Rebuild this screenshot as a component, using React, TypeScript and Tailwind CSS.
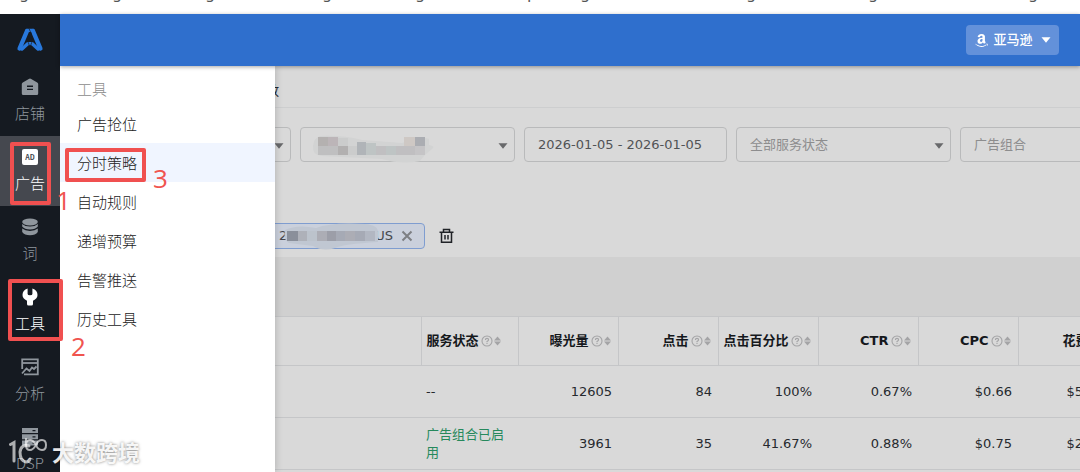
import type { ReactNode } from 'react';
import { FaAmazon } from 'react-icons/fa';

const textFont = "font-['DejaVu_Sans','Noto_Sans_CJK_SC',sans-serif]";
const cjkFont = "font-['Noto_Sans_CJK_SC',sans-serif]";

interface NavItem {
  label: string;
  icon: ReactNode;
  state?: 'active' | 'open';
}

const navItems: NavItem[] = [
  {
    label: '店铺',
    icon: (
      <svg width="18" height="18" viewBox="0 0 18 18" fill="currentColor">
        <path
          fillRule="evenodd"
          d="M9 0.5 Q9.6 0.5 10.2 0.9 L16.2 4.4 Q17.2 5 17.2 6 V15.5 Q17.2 17 15.7 17 H2.3 Q0.8 17 0.8 15.5 V6 Q0.8 5 1.8 4.4 L7.8 0.9 Q8.4 0.5 9 0.5 Z M6 7.6 V8.9 H12 V7.6 Z M6 10.8 V12.1 H12 V10.8 Z"
        />
      </svg>
    ),
  },
  {
    label: '广告',
    state: 'active',
    icon: (
      <span className="flex h-4 w-4 items-center justify-center rounded-xs bg-white text-[7px] font-bold text-[#45484f]">
        AD
      </span>
    ),
  },
  {
    label: '词',
    icon: (
      <svg width="18" height="18" viewBox="0 0 18 18" fill="currentColor">
        <ellipse cx="9" cy="4" rx="7.8" ry="3.4" />
        <path d="M1.2 5.9 Q4 8.4 9 8.4 Q14 8.4 16.8 5.9 V8.6 Q14.5 11.6 9 11.6 Q3.5 11.6 1.2 8.6 Z" />
        <path d="M1.2 10.5 Q4 12.9 9 12.9 Q14 12.9 16.8 10.5 V14 Q14.5 17.2 9 17.2 Q3.5 17.2 1.2 14 Z" />
      </svg>
    ),
  },
  {
    label: '工具',
    state: 'open',
    icon: (
      <svg width="18" height="18" viewBox="0 0 18 18" fill="currentColor">
        <path d="M6.6 0.5 V6 Q6.6 7.3 9 7.3 Q11.4 7.3 11.4 6 V0.5 Q16.5 2.2 16.5 7 Q16.5 10.6 12 12.8 V16 Q12 17.5 10.5 17.5 H7.5 Q6 17.5 6 16 V12.8 Q1.5 10.6 1.5 7 Q1.5 2.2 6.6 0.5 Z" />
      </svg>
    ),
  },
  {
    label: '分析',
    icon: (
      <svg width="18" height="18" viewBox="0 0 18 18" fill="none" stroke="currentColor" strokeWidth="1.8">
        <path d="M1.2 11 V1.4 H16.8 V16.4 H3" />
        <path d="M1 5 H17" />
        <path d="M1 15.5 L5.5 10.5 L8.5 13 L11 9.5 L13 11 L15.5 8.5" />
      </svg>
    ),
  },
  {
    label: 'DSP',
    icon: (
      <svg width="18" height="18" viewBox="0 0 18 18" fill="currentColor">
        <path fillRule="evenodd" d="M1 0 H17 V5 H1 Z M11.5 2 V3.2 H14.5 V2 Z" />
        <path fillRule="evenodd" d="M1 6.3 H17 V11.3 H1 Z M11.5 8.3 V9.5 H14.5 V8.3 Z" />
        <path fillRule="evenodd" d="M1 12.6 H17 V17.6 H1 Z M11.5 14.6 V15.8 H14.5 V14.6 Z" />
      </svg>
    ),
  },
];

// Tail of the line above the page; each span is the room up to the next letter.
const captionLetters = [
  { char: 'g', span: 93 },
  { char: 'g', span: 93 },
  { char: 'g', span: 117 },
  { char: 'g', span: 93 },
  { char: 'g', span: 112 },
  { char: 'p', span: 53 },
  { char: 'g', span: 166 },
  { char: 'g', span: 122 },
  { char: 'g', span: 160 },
  { char: 'g', span: 52 },
];

const menuItems = ['广告抢位', '分时策略', '自动规则', '递增预算', '告警推送', '历史工具'];

const columns = ['曝光量', '点击', '点击百分比', 'CTR', 'CPC', '花费'];

const rows = [
  { status: '--', values: ['12605', '84', '100%', '0.67%', '$0.66', '$55.44'] },
  { status: '广告组合已启用', values: ['3961', '35', '41.67%', '0.88%', '$0.75', '$26.25'] },
];

function Caret({ className = '' }: { className?: string }) {
  return (
    <svg width="10" height="6" viewBox="0 0 10 6" fill="currentColor" className={className}>
      <path d="M0.5 0.3 H9.5 L5 5.8 Z" />
    </svg>
  );
}

function HeaderIcons() {
  return (
    <svg width="22" height="12" viewBox="0 0 22 12" className="ml-0.5 shrink-0 text-[#a4a4a6]">
      <circle cx="6" cy="6" r="5" fill="none" stroke="currentColor" strokeWidth="1.1" />
      <path d="M4.4 5 Q4.4 3.4 6 3.4 Q7.6 3.4 7.6 4.8 Q7.6 5.8 6 6.4 V7.2 M6 8 V9" fill="none" stroke="currentColor" strokeWidth="1.1" />
      <path d="M13 5.4 L16.5 1.6 L20 5.4 Z M13 6.6 L16.5 10.4 L20 6.6 Z" fill="currentColor" />
    </svg>
  );
}

function FilterSelect({ label, text = '', children }: { label: string; text?: string; children?: ReactNode }) {
  return (
    <div className="relative w-[215px] shrink-0">
      <select
        aria-label={label}
        className="h-[35px] w-full appearance-none rounded border border-[#b9babb] bg-transparent px-[13px] text-[13px] text-[#8d8d8e]"
      >
        <option>{text}</option>
      </select>
      <Caret className="pointer-events-none absolute top-4 right-[7px] text-[#68696b]" />
      {children}
    </div>
  );
}

function StoreMosaic() {
  return (
    <svg width="124" height="32" viewBox="0 0 124 32" className="pointer-events-none absolute top-2 left-3">
      <path d="M8 1 Q30 0 50 5 L90 8 Q112 1 117 4 V10 Q124 11 120 14 Q112 20 108 26 Q90 30 70 24 L10 21 Q0 20 1 11 Q2 3 8 1 Z" fill="#d2d3d3" />
      <path d="M6 2 H16 V11 H6 Z" fill="#b4b1b0" />
      <path d="M16 2 H26 V11 H16 Z" fill="#bcb5b8" />
      <path d="M26 11 H36 V20 H26 Z" fill="#b2b0b0" />
      <path d="M26 3 H36 V11 H26 Z M36 11 H45 V20 H36 Z" fill="#cbcccc" />
      <path d="M16 11 H26 V20 H16 Z M6 11 H16 V20 H6 Z" fill="#bfbfc0" />
      <path d="M45 7 H54 V20 H45 Z" fill="#b0b4b8" />
      <path d="M54 8 H64 V20 H54 Z M74 11 H84 V20 H74 Z" fill="#bec4c4" />
      <path d="M64 11 H74 V20 H64 Z M84 11 H103 V20 H84 Z" fill="#c0bfc1" />
      <path d="M92 2 H103 V11 H92 Z" fill="#cec8c4" />
      <path d="M103 2 H113 V11 H103 Z" fill="#abadb2" />
      <path d="M103 11 H113 V20 H103 Z" fill="#c5c4c6" />
    </svg>
  );
}

function ChipMosaic() {
  return (
    <svg width="96" height="28" viewBox="0 0 96 28" className="relative -mr-1 -ml-1">
      <path d="M2 8 Q14 2 33 6 Q48 0 82 2 Q95 3 95 10 V20 Q60 22 52 26 Q40 30 30 24 L6 21 Q0 18 2 8 Z" fill="#c0c7d2" />
      <path d="M4 9 H15 V19 H4 Z" fill="#8a8f9a" />
      <path d="M15 9 H24 V19 H15 Z" fill="#aeb1b9" />
      <path d="M24 9 H34 V19 H24 Z" fill="#bcc3cc" />
      <path d="M34 9 H44 V19 H34 Z M62 9 H72 V19 H62 Z" fill="#acadb5" />
      <path d="M44 9 H53 V19 H44 Z" fill="#9c9ea8" />
      <path d="M53 9 H62 V19 H53 Z M72 9 H82 V19 H72 Z" fill="#a6aab5" />
      <path d="M82 9 H92 V19 H82 Z" fill="#b2b7c2" />
    </svg>
  );
}

function Sidebar() {
  return (
    <nav className={`w-[60px] shrink-0 bg-[#151a21] text-[#8f969d] ${cjkFont}`}>
      <div className="flex h-[52px] items-center justify-center">
        <svg width="28" height="24" viewBox="0 0 28 24" fill="none" stroke="#2878dc" strokeLinejoin="round" strokeLinecap="round">
          <path d="M11 3 L3.6 20.5" strokeWidth="4.4" />
          <path d="M17 3 L24.4 20.5" strokeWidth="4.4" />
          <path d="M11 2.4 H17" strokeWidth="3.2" />
          <path d="M6 21 L12 15.6 H16 L22 21" strokeWidth="3.4" />
          <path d="M13.2 1 L15.2 5.5 M12.3 14.5 L13.5 18 M15.7 14.5 L14.5 18" stroke="#151a21" strokeWidth="0.7" />
        </svg>
      </div>
      {navItems.map(item => (
        <a
          key={item.label}
          href="#"
          className={`flex h-[70px] flex-col items-center gap-1 pt-3 text-[15px] leading-[26px] font-light ${
            item.state === 'active' ? 'bg-[#45484f] text-white' : item.state === 'open' ? 'text-white' : ''
          }`}
        >
          <span className="flex h-[18px] items-center">{item.icon}</span>
          {item.label}
        </a>
      ))}
    </nav>
  );
}

function ToolsMenu() {
  return (
    <div className={`absolute inset-y-0 left-0 w-[215px] bg-white pt-[7px] text-[15px] font-light shadow-[0_0_8px_rgba(0,0,0,0.2)] ${cjkFont}`}>
      <h2 className="px-[17px] text-[15px] leading-[31px] text-[#8c8c8c]">工具</h2>
      {menuItems.map(item => (
        <a
          key={item}
          href="#"
          className={`block px-[17px] leading-[39px] text-[#222] ${item === '分时策略' ? 'bg-[#f0f5ff]' : ''}`}
        >
          {item}
        </a>
      ))}
    </div>
  );
}

function Filters() {
  return (
    <div className="flex gap-[9px] px-4 pt-[19px]">
      <FilterSelect label="站点" />
      <FilterSelect label="店铺">
        <StoreMosaic />
      </FilterSelect>
      <input
        aria-label="日期"
        readOnly
        value="2026-01-05 - 2026-01-05"
        className="h-[35px] w-[203px] shrink-0 rounded border border-[#b9babb] bg-transparent px-[13px] text-[13px] text-[#515355]"
      />
      <FilterSelect label="服务状态" text="全部服务状态" />
      <FilterSelect label="广告组合" text="广告组合" />
    </div>
  );
}

function DataTable() {
  return (
    <table className="w-[1058px] table-fixed border-collapse text-[13px] text-[#26292e]">
      <colgroup>
        <col className="w-[361px]" />
        <col className="w-[97px]" />
        {columns.map(name => (
          <col key={name} className="w-[100px]" />
        ))}
      </colgroup>
      <thead>
        <tr className="h-[49px] border-y border-[#c5c6c8] text-[#15181c]">
          <th className="border-r border-[#c5c6c8]" />
          <th className="border-r border-[#c5c6c8] px-[5px]">
            <span className="flex items-center whitespace-nowrap">
              服务状态
              <HeaderIcons />
            </span>
          </th>
          {columns.map(name => (
            <th key={name} className="border-r border-[#c5c6c8] pr-[5px]">
              <span className="flex items-center justify-end whitespace-nowrap">
                {name}
                <HeaderIcons />
              </span>
            </th>
          ))}
        </tr>
      </thead>
      <tbody>
        {rows.map(row => (
          <tr key={row.status} className="h-[52px] border-b border-[#c5c6c8]">
            <td />
            <td className={`px-[5px] leading-[18px] ${row.status === '--' ? '' : 'text-[#26895c]'}`}>{row.status}</td>
            {row.values.map(value => (
              <td key={value} className="pr-1.5 text-right">
                {value}
              </td>
            ))}
          </tr>
        ))}
      </tbody>
    </table>
  );
}

// Red numbered marks laid over the page: 1 nav, 2 tools, 3 menu entry.
function Annotations() {
  return (
    <div className="pointer-events-none absolute inset-0 font-['Open_Sans',sans-serif] text-[26px] leading-[26px] text-[#f0544f]">
      <div className="absolute top-[142px] left-[10px] h-[63px] w-[41px] rounded-xs border-4 border-[#f05050]" />
      <span className="absolute top-[187px] left-[56px]">1</span>
      <div className="absolute top-[279px] left-[8px] h-[62px] w-[55px] rounded-xs border-4 border-[#f05050]" />
      <span className="absolute top-[333px] left-[71px]">2</span>
      <div className="absolute top-[148px] left-[65px] h-[34px] w-[81px] rounded-xs border-4 border-[#f05050]" />
      <span className="absolute top-[165px] left-[153px]">3</span>
    </div>
  );
}

function Watermark() {
  return (
    <div className={`pointer-events-none absolute top-[436px] left-[9px] flex items-center gap-1 text-white/90 ${cjkFont}`}>
      <svg width="39" height="30" viewBox="0 0 39 30" fill="none" stroke="#fff" strokeOpacity="0.65" strokeLinecap="round">
        <path d="M1.5 8.5 L5 6.5 V25" strokeWidth="3" />
        <path d="M20 10 Q12 8 11 16 Q11 25 17 26 Q20 26 21 23" strokeWidth="3" />
        <path d="M17 3 V9 Q17 14 21 14 Q24 14 27 9 Q29 4 33 4 Q37 4 37 9 Q37 14 33 14 Q29 14 27 9 Q24 4 21 4 Q17 4 17 9" strokeWidth="2" />
      </svg>
      <span className="text-[22px] leading-[30px] font-bold [text-shadow:0_0_3px_rgba(0,0,0,0.5)]">大数跨境</span>
    </div>
  );
}

export default function App() {
  return (
    <div className={`relative flex h-screen flex-col overflow-hidden bg-white ${textFont}`}>
      <div className="h-[14px] shrink-0 overflow-hidden text-base leading-4 text-[#555]">
        <p className="-mt-3.5 flex pl-[19px]">
          {captionLetters.map(({ char, span }, i) => (
            <span key={i} className="basis-0" style={{ flexGrow: span }}>
              {char}
            </span>
          ))}
        </p>
      </div>

      <div className="flex min-h-0 flex-1">
        <Sidebar />
        <div className="flex min-w-0 flex-1 flex-col">
          <header className="z-10 flex h-[52px] shrink-0 items-center justify-end bg-[#2f6fcd] pr-[21px] shadow-[0_1px_4px_rgba(0,0,0,0.35)]">
            <button className="flex h-[30px] w-[93px] items-center justify-center gap-1 rounded bg-[#6391da] text-[13px] font-medium text-white">
              <FaAmazon size={15} />
              亚马逊
              <Caret className="ml-1" />
            </button>
          </header>

          <div className="relative min-h-0 flex-1 overflow-hidden bg-[#d9d9d9]">
            <div className="flex h-[42px] items-center border-b border-[#cdcecf] pt-2 pl-[141px] text-[13px] text-[#26292e]">
              广告管理投放
            </div>
            <Filters />
            <div className="flex items-center px-4 pt-[61px] pb-2">
              <span className="flex h-[26px] w-[349px] items-center justify-end rounded border border-[#7f9dd0] bg-[#cad0dc] pr-[11px] text-[13px] text-[#45484d]">
                2
                <ChipMosaic />
                US
                <button aria-label="移除" className="ml-2">
                  <svg width="12" height="12" viewBox="0 0 12 12" stroke="#7d7f83" strokeWidth="2">
                    <path d="M1.5 1.5 L10.5 10.5 M10.5 1.5 L1.5 10.5" />
                  </svg>
                </button>
              </span>
              <button aria-label="清空" className="ml-[14px]">
                <svg width="15" height="16" viewBox="0 0 15 16" fill="none" stroke="#202327" strokeWidth="1.5">
                  <path d="M0.5 4.2 H14.5 M2.5 4.2 V14.2 H12.5 V4.2 M4.5 4 V1.5 H10.5 V4 M6 7 V11.5 M9 7 V11.5" />
                </svg>
              </button>
            </div>
            <div className="h-[59px] bg-[#d0d0d0]" />
            <DataTable />
            <ToolsMenu />
          </div>
        </div>
      </div>

      <Annotations />
      <Watermark />
    </div>
  );
}
